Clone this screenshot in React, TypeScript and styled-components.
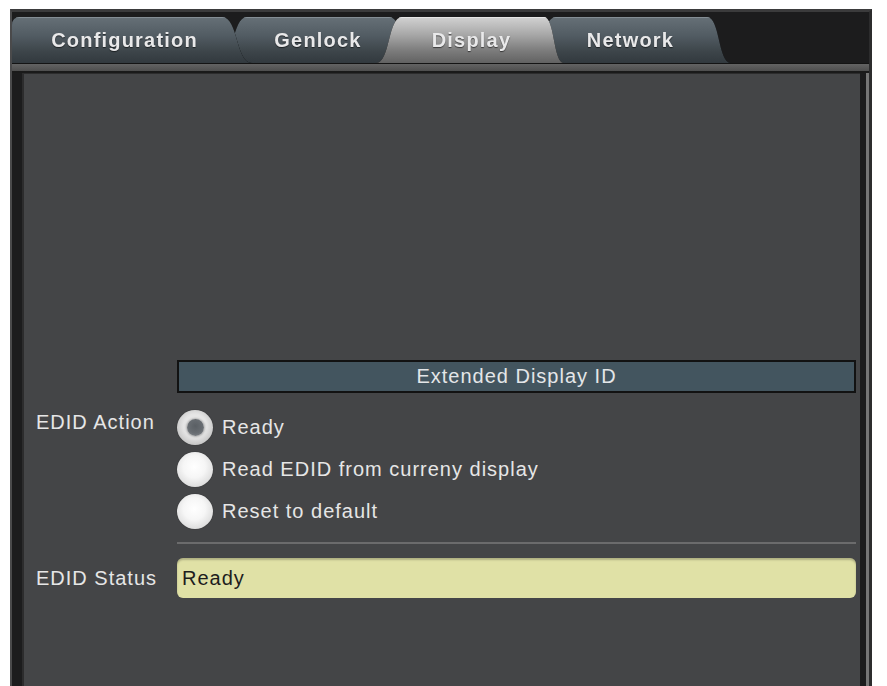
import React from 'react';
import styled, { createGlobalStyle, css } from 'styled-components';

const GlobalStyle = createGlobalStyle`
  html, body { margin: 0; padding: 0; background: #ffffff; }
  body { font-family: "Liberation Sans", Arial, sans-serif; }
  * { box-sizing: border-box; }
`;

const Page = styled.div`
  padding: 9px 0 0 10px;
  height: 686px;
  overflow: hidden;
`;

const Frame = styled.div`
  width: 862px;
  height: 677px;
  display: flex;
  flex-direction: column;
  background: #1c1c1d;
  border-top: 3px solid #3b3b3c;
  border-left: 2px solid #4a4a4b;
  border-right: 3px solid #2c2c2d;
`;

const TabBar = styled.div`
  flex: none;
  display: flex;
  align-items: flex-end;
  height: 51px;
  padding-top: 5px;
`;

const TabWrap = styled.div<{ $ml: number; $z: number }>`
  position: relative;
  flex: none;
  margin-left: ${(p) => p.$ml}px;
  z-index: ${(p) => p.$z};
  filter: drop-shadow(0 0 0.7px rgba(0, 0, 0, 0.95));
`;

const TabFace = styled.div<{ $w: number; $ls: number; $rs: number; $path: string; $active?: boolean }>`
  width: ${(p) => p.$w}px;
  height: 46px;
  clip-path: path('${(p) => p.$path}');
  display: flex;
  align-items: center;
  justify-content: center;
  padding-left: ${(p) => p.$ls / 2}px;
  padding-right: ${(p) => p.$rs / 2}px;
  font-size: 20px;
  font-weight: bold;
  letter-spacing: 1.2px;
  color: #e9e9ea;
  text-shadow: 0 1px 1px rgba(0, 0, 0, 0.55);
  ${(p) =>
    p.$active
      ? css`
          background: linear-gradient(to bottom, #d2d2d2 0%, #a8a8a8 38%, #7d7d7d 72%, #626262 100%);
          box-shadow: inset 0 1px 0 #e6e6e6;
        `
      : css`
          background: linear-gradient(to bottom, #667077 0%, #525c63 40%, #3d454a 75%, #32393e 100%);
          box-shadow: inset 0 1px 0 #848e95;
        `}
`;

const TabStripe = styled.div`
  flex: none;
  height: 10px;
  border-top: 1px solid #141414;
  border-bottom: 2px solid #1a1a1a;
  background: linear-gradient(#636363, #4e4e4e);
`;

const Body = styled.div`
  flex: 1;
  min-height: 0;
  display: flex;
  padding: 0 6px 0 10px;
  border-right: 3px solid #767676;
`;

const Panel = styled.div`
  flex: 1;
  display: flex;
  flex-direction: column;
  background: #444547;
  border-left: 2px solid #2c2c2d;
  border-top: 1px solid #2c2c2d;
  padding: 286px 4px 0 12px;
`;

const FormRow = styled.div<{ $mt?: number }>`
  display: grid;
  grid-template-columns: 141px 1fr;
  margin-top: ${(p) => p.$mt ?? 0}px;
`;

const Label = styled.div<{ $center?: boolean }>`
  font-size: 20px;
  letter-spacing: 1px;
  color: #e6e6e6;
  line-height: 32px;
  align-self: ${(p) => (p.$center ? 'center' : 'start')};
`;

const HeaderBar = styled.div`
  height: 33px;
  background: #43555f;
  border: 2px solid #121212;
  color: #e4e6e8;
  font-size: 20px;
  letter-spacing: 1px;
  line-height: 29px;
  text-align: center;
`;

const RadioList = styled.div`
  display: flex;
  flex-direction: column;
`;

const RadioItem = styled.label`
  height: 42px;
  display: flex;
  align-items: center;
  gap: 9px;
  font-size: 20px;
  letter-spacing: 1px;
  color: #e6e6e6;
`;

const RadioDot = styled.span<{ $checked?: boolean }>`
  flex: none;
  width: 36px;
  height: 35px;
  border-radius: 50%;
  display: flex;
  align-items: center;
  justify-content: center;
  box-shadow: 0 0 1px rgba(0, 0, 0, 0.6);
  background: ${(p) =>
    p.$checked
      ? 'radial-gradient(circle at 50% 45%, #f4f4f4 0%, #e4e4e4 45%, #c4c4c4 75%, #9c9c9c 100%)'
      : 'radial-gradient(circle at 48% 42%, #ffffff 0%, #f6f6f6 40%, #dcdcdc 75%, #b8b8b8 100%)'};
`;

const RadioInner = styled.span`
  width: 17px;
  height: 17px;
  border-radius: 50%;
  background: radial-gradient(circle at 50% 42%, #5a5f64 0%, #686d72 55%, #8d9196 100%);
  box-shadow: 0 0 2px 1px rgba(70, 70, 70, 0.35);
`;

const Divider = styled.div`
  height: 2px;
  background: #6b6b6c;
`;

const StatusField = styled.div`
  height: 40px;
  display: flex;
  align-items: center;
  padding-left: 5px;
  border-radius: 6px;
  background: #e0e1a6;
  box-shadow: inset 0 2px 2px rgba(0, 0, 0, 0.22);
  color: #1d1d1d;
  font-size: 20px;
  letter-spacing: 1px;
`;

type TabDef = { label: string; w: number; ml: number; ls: number; rs: number; z: number; active?: boolean };

const TAB_H = 46;

const tabPath = (w: number, ls: number, rs: number) => {
  const h = TAB_H;
  const left = ls === 0 ? `M0 ${h} L0 8 Q0 0 8 0` : `M0 ${h} C${ls * 0.55} ${h} ${ls * 0.45} 0 ${ls} 0`;
  const right = `L${w - rs} 0 C${w - rs * 0.45} 0 ${w - rs * 0.55} ${h} ${w} ${h}`;
  return `${left} ${right} Z`;
};

const tabs: TabDef[] = [
  { label: 'Configuration', w: 240, ml: 0, ls: 0, rs: 30, z: 4 },
  { label: 'Genlock', w: 198, ml: -33, ls: 28, rs: 28, z: 3 },
  { label: 'Display', w: 188, ml: -41, ls: 26, rs: 20, z: 5, active: true },
  { label: 'Network', w: 203, ml: -36, ls: 28, rs: 24, z: 1 },
];

const options = ['Ready', 'Read EDID from curreny display', 'Reset to default'];

export default function App() {
  return (
    <Page>
      <GlobalStyle />
      <Frame>
        <TabBar>
          {tabs.map((t) => (
            <TabWrap key={t.label} $ml={t.ml} $z={t.z}>
              <TabFace $w={t.w} $ls={t.ls} $rs={t.rs} $path={tabPath(t.w, t.ls, t.rs)} $active={t.active}>
                {t.label}
              </TabFace>
            </TabWrap>
          ))}
        </TabBar>
        <TabStripe />
        <Body>
          <Panel>
            <FormRow>
              <Label />
              <HeaderBar>Extended Display ID</HeaderBar>
            </FormRow>
            <FormRow $mt={13}>
              <Label>EDID Action</Label>
              <RadioList>
                {options.map((o, i) => (
                  <RadioItem key={o}>
                    <RadioDot $checked={i === 0}>{i === 0 && <RadioInner />}</RadioDot>
                    {o}
                  </RadioItem>
                ))}
              </RadioList>
            </FormRow>
            <FormRow $mt={10}>
              <Label />
              <Divider />
            </FormRow>
            <FormRow $mt={14}>
              <Label $center>EDID Status</Label>
              <StatusField>Ready</StatusField>
            </FormRow>
          </Panel>
        </Body>
      </Frame>
    </Page>
  );
}
